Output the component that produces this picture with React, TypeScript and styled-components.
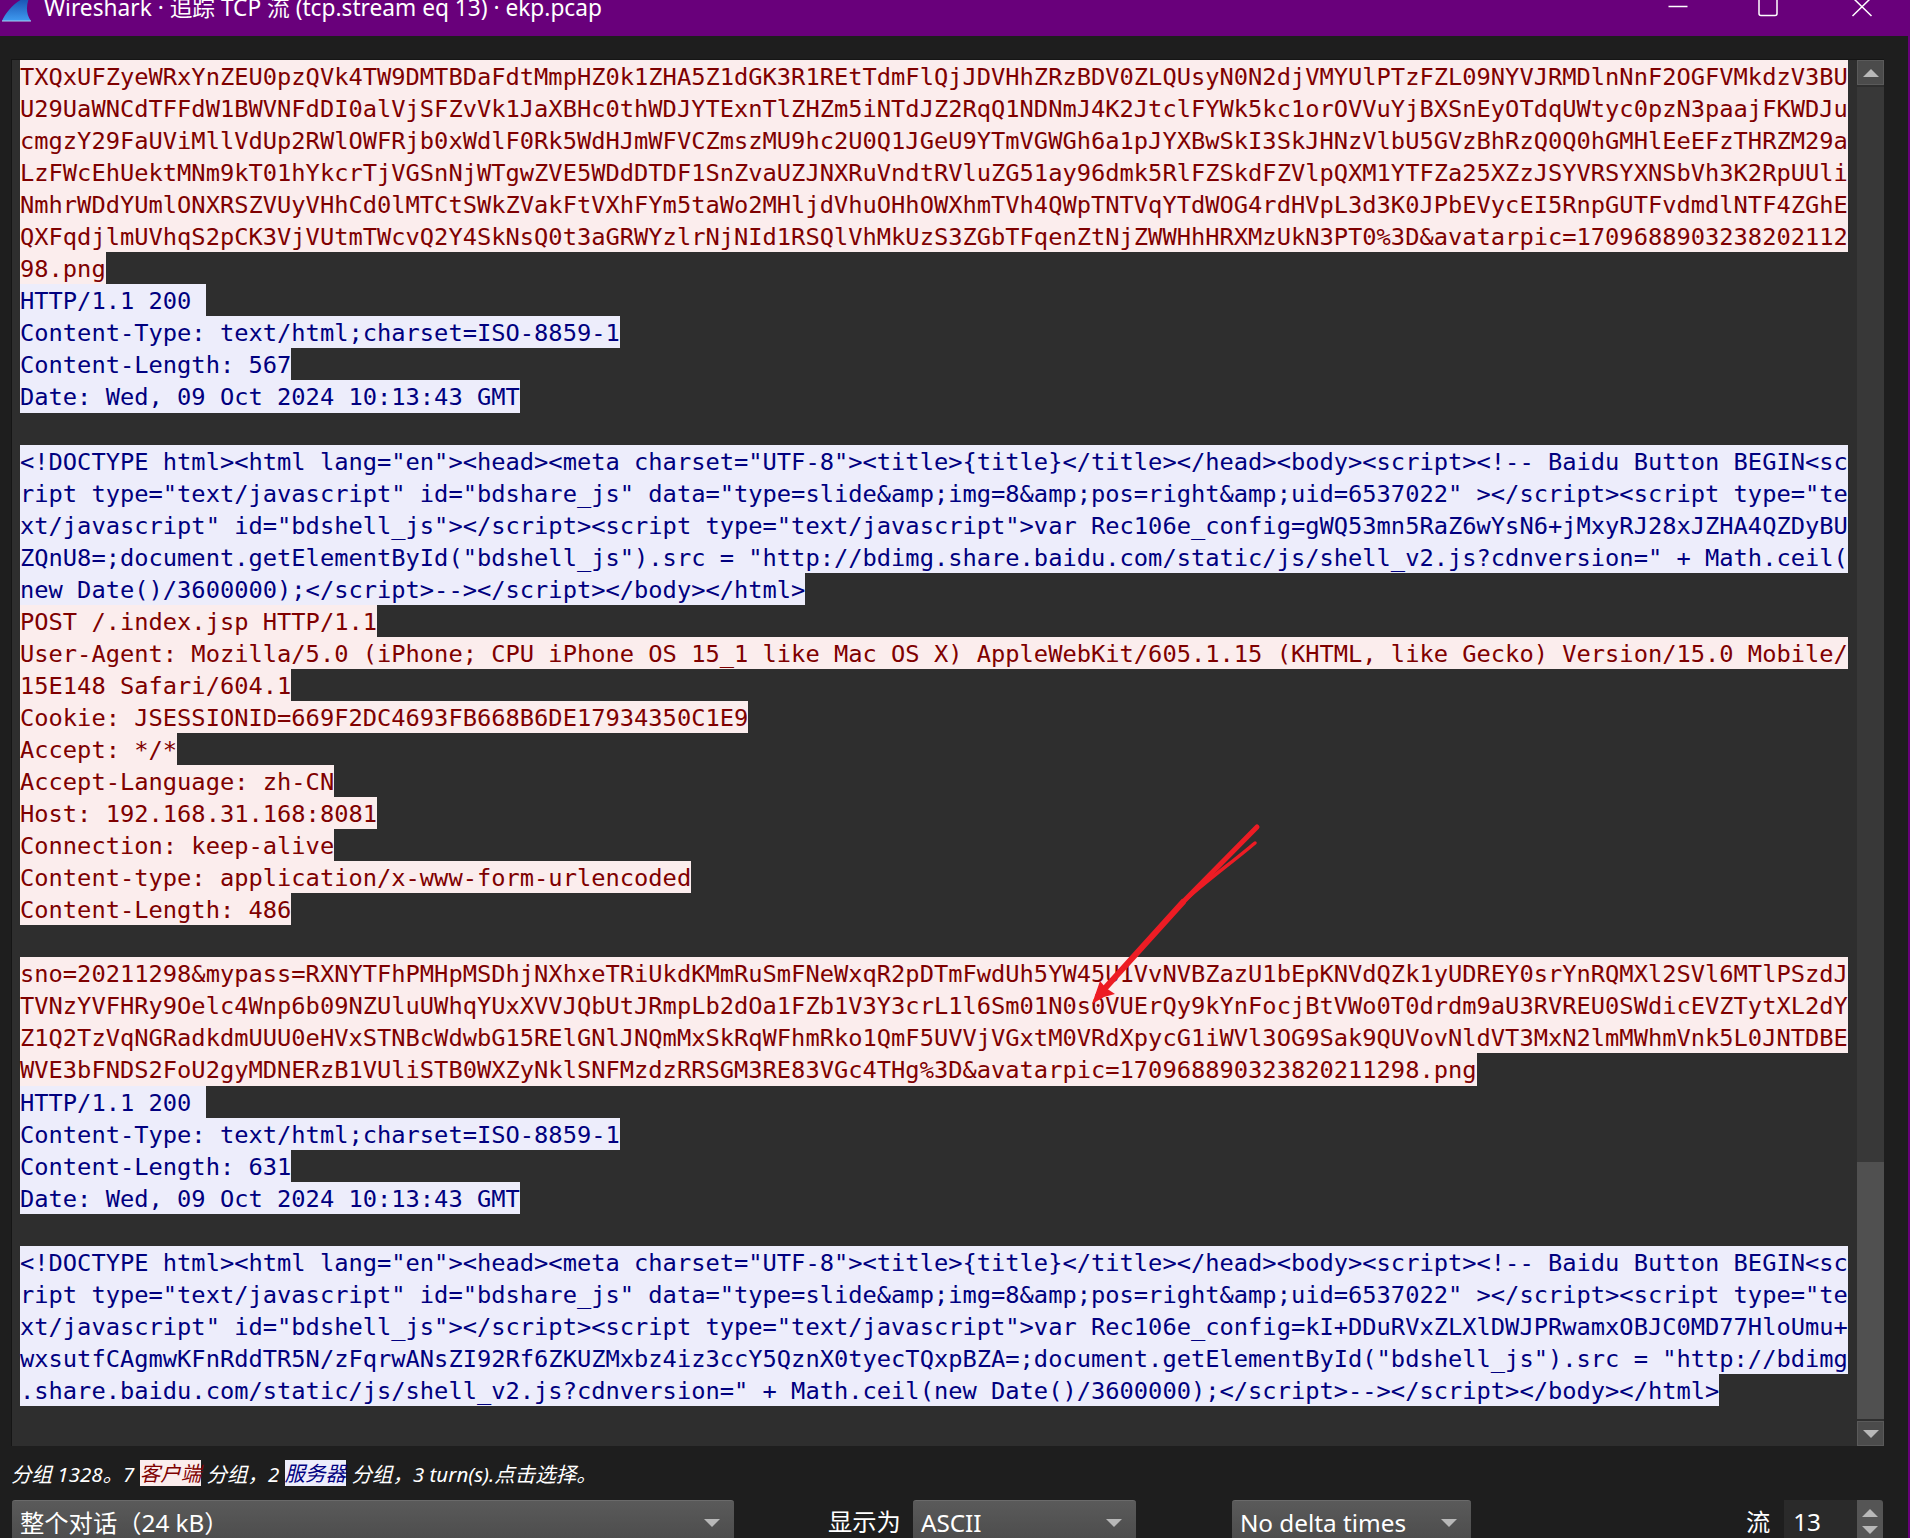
import styled, { createGlobalStyle } from 'styled-components';

type Side = 'client' | 'server' | 'gap';

const GlobalStyle = createGlobalStyle`
  html, body {
    margin: 0;
    padding: 0;
    background: #1e1e1e;
  }
`;

const uiFont = `'Noto Sans', 'Noto Sans CJK SC', sans-serif`;

const Window = styled.div`
  position: relative;
  width: 1910px;
  height: 1538px;
  overflow: hidden;
  display: flex;
  flex-direction: column;
  background: #1e1e1e;
  font-family: ${uiFont};
`;

const TitleBar = styled.div`
  flex: none;
  height: 36px;
  display: flex;
  align-items: flex-start;
  overflow: hidden;
  background: #69007b;
  color: #fff;
`;

const Logo = styled.svg`
  flex: none;
  width: 32px;
  height: 22px;
  margin-right: 12px;
`;

const TitleText = styled.div`
  margin-top: -8px;
  font-size: 22.7px;
  line-height: 32px;
  white-space: pre;
`;

const WindowButtons = styled.div`
  display: flex;
  margin-left: auto;
  padding-right: 2px;
`;

const WindowButton = styled.svg`
  display: block;
  width: 92px;
  height: 20px;
`;

const Body = styled.div`
  flex: 1;
  min-height: 0;
  display: flex;
  flex-direction: column;
  padding: 23px 24px 0 11px;
  border-right: 2px solid #69007b;
`;

const StreamPanel = styled.div`
  flex: none;
  height: 1387px;
  display: flex;
  box-sizing: border-box;
  background: #2e2e2e;
  border-top: 1px solid #151515;
  border-left: 1px solid #151515;
`;

const Stream = styled.div`
  flex: 1;
  min-width: 0;
  padding-left: 8px;
`;

const StreamLine = styled.div<{ $side: Side }>`
  width: fit-content;
  height: 32.05px;
  box-sizing: border-box;
  padding-top: 2px;
  font-family: 'DejaVu Sans Mono', monospace;
  font-size: 23.72px;
  line-height: 30.05px;
  white-space: pre;
  background: ${(p) => (p.$side === 'client' ? '#fbeded' : p.$side === 'server' ? '#ededfb' : 'transparent')};
  color: ${(p) => (p.$side === 'client' ? '#7f0000' : '#00007f')};
`;

const ScrollBar = styled.div`
  flex: none;
  width: 27px;
  display: flex;
  flex-direction: column;
  gap: 2px;
  background: #2e2e2e;
`;

const ScrollButton = styled.div`
  flex: none;
  height: 25px;
  display: flex;
  align-items: center;
  justify-content: center;
  background: #4b4b4b;
  border: 1px solid #5a5a5a;
  box-sizing: border-box;
`;

const ScrollTrack = styled.div`
  flex: 1;
  display: flex;
  flex-direction: column;
  justify-content: flex-end;
  background: #383838;
`;

const ScrollHandle = styled.div`
  height: 257px;
  background: #505050;
`;

const Triangle = styled.span<{ $up?: boolean }>`
  display: block;
  flex: none;
  width: 0;
  height: 0;
  border-left: 8px solid transparent;
  border-right: 8px solid transparent;
  ${(p) => (p.$up ? 'border-bottom' : 'border-top')}: 8px solid #b8b8b8;
`;

const StatusLine = styled.div`
  flex: none;
  height: 26px;
  margin: 14px 0;
  display: flex;
  align-items: center;
  color: #fff;
  font-size: 20.5px;
  font-style: italic;
  white-space: pre;
`;

const StatusTag = styled.span<{ $side: Side }>`
  height: 26px;
  line-height: 26px;
  background: ${(p) => (p.$side === 'client' ? '#fbeded' : '#ededfb')};
  color: ${(p) => (p.$side === 'client' ? '#7f0000' : '#00007f')};
`;

const Controls = styled.div`
  flex: none;
  height: 50px;
  display: flex;
  align-items: flex-start;
  padding-left: 1px;
  color: #fff;
  font-size: 24.3px;
`;

const Combo = styled.div<{ $width: number; $offset: number }>`
  flex: none;
  box-sizing: border-box;
  width: ${(p) => p.$width}px;
  height: 50px;
  margin-left: ${(p) => p.$offset}px;
  padding: 0 14px 6px 8px;
  display: flex;
  align-items: center;
  justify-content: space-between;
  background: linear-gradient(#5a5a5a, #494949);
  border-top: 1px solid #6a6a6a;
  border-radius: 3px;
  line-height: 43px;
  white-space: pre;
`;

const FieldLabel = styled.div<{ $offset: number }>`
  flex: none;
  margin-left: ${(p) => p.$offset}px;
  height: 44px;
  line-height: 44px;
`;

const SpinBox = styled.div`
  flex: none;
  display: flex;
  width: 99px;
  height: 50px;
  margin-left: 14px;
`;

const SpinValue = styled.div`
  flex: 1;
  padding-left: 9px;
  line-height: 44px;
  background: #2a2a2a;
`;

const SpinButtons = styled.div`
  flex: none;
  width: 26px;
  display: flex;
  flex-direction: column;
  align-items: center;
  gap: 9px;
  padding-top: 9px;
  box-sizing: border-box;
  background: #555;
  border-radius: 0 3px 0 0;
`;

const Annotation = styled.svg`
  position: absolute;
  left: 0;
  top: 0;
  width: 1910px;
  height: 1538px;
  pointer-events: none;
`;

const htmlHead = [
  '<!DOCTYPE html><html lang="en"><head><meta charset="UTF-8"><title>{title}</title></head><body><script><!-- Baidu Button BEGIN<sc',
  'ript type="text/javascript" id="bdshare_js" data="type=slide&amp;img=8&amp;pos=right&amp;uid=6537022" ></script><script type="te',
];

const conversation: [Side, string[]][] = [
  ['client', [
    'TXQxUFZyeWRxYnZEU0pzQVk4TW9DMTBDaFdtMmpHZ0k1ZHA5Z1dGK3R1REtTdmFlQjJDVHhZRzBDV0ZLQUsyN0N2djVMYUlPTzFZL09NYVJRMDlnNnF2OGFVMkdzV3BU',
    'U29UaWNCdTFFdW1BWVNFdDI0alVjSFZvVk1JaXBHc0thWDJYTExnTlZHZm5iNTdJZ2RqQ1NDNmJ4K2JtclFYWk5kc1orOVVuYjBXSnEyOTdqUWtyc0pzN3paajFKWDJu',
    'cmgzY29FaUViMllVdUp2RWlOWFRjb0xWdlF0Rk5WdHJmWFVCZmszMU9hc2U0Q1JGeU9YTmVGWGh6a1pJYXBwSkI3SkJHNzVlbU5GVzBhRzQ0Q0hGMHlEeEFzTHRZM29a',
    'LzFWcEhUektMNm9kT01hYkcrTjVGSnNjWTgwZVE5WDdDTDF1SnZvaUZJNXRuVndtRVluZG51ay96dmk5RlFZSkdFZVlpQXM1YTFZa25XZzJSYVRSYXNSbVh3K2RpUUli',
    'NmhrWDdYUmlONXRSZVUyVHhCd0lMTCtSWkZVakFtVXhFYm5taWo2MHljdVhuOHhOWXhmTVh4QWpTNTVqYTdWOG4rdHVpL3d3K0JPbEVycEI5RnpGUTFvdmdlNTF4ZGhE',
    'QXFqdjlmUVhqS2pCK3VjVUtmTWcvQ2Y4SkNsQ0t3aGRWYzlrNjNId1RSQlVhMkUzS3ZGbTFqenZtNjZWWHhHRXMzUkN3PT0%3D&avatarpic=1709688903238202112',
    '98.png',
  ]],
  ['server', [
    'HTTP/1.1 200 ',
    'Content-Type: text/html;charset=ISO-8859-1',
    'Content-Length: 567',
    'Date: Wed, 09 Oct 2024 10:13:43 GMT',
  ]],
  ['gap', ['']],
  ['server', [
    ...htmlHead,
    'xt/javascript" id="bdshell_js"></script><script type="text/javascript">var Rec106e_config=gWQ53mn5RaZ6wYsN6+jMxyRJ28xJZHA4QZDyBU',
    'ZQnU8=;document.getElementById("bdshell_js").src = "http://bdimg.share.baidu.com/static/js/shell_v2.js?cdnversion=" + Math.ceil(',
    'new Date()/3600000);</script>--></script></body></html>',
  ]],
  ['client', [
    'POST /.index.jsp HTTP/1.1',
    'User-Agent: Mozilla/5.0 (iPhone; CPU iPhone OS 15_1 like Mac OS X) AppleWebKit/605.1.15 (KHTML, like Gecko) Version/15.0 Mobile/',
    '15E148 Safari/604.1',
    'Cookie: JSESSIONID=669F2DC4693FB668B6DE17934350C1E9',
    'Accept: */*',
    'Accept-Language: zh-CN',
    'Host: 192.168.31.168:8081',
    'Connection: keep-alive',
    'Content-type: application/x-www-form-urlencoded',
    'Content-Length: 486',
  ]],
  ['gap', ['']],
  ['client', [
    'sno=20211298&mypass=RXNYTFhPMHpMSDhjNXhxeTRiUkdKMmRuSmFNeWxqR2pDTmFwdUh5YW45U1VvNVBZazU1bEpKNVdQZk1yUDREY0srYnRQMXl2SVl6MTlPSzdJ',
    'TVNzYVFHRy9Oelc4Wnp6b09NZUluUWhqYUxXVVJQbUtJRmpLb2dOa1FZb1V3Y3crL1l6Sm01N0s0VUErQy9kYnFocjBtVWo0T0drdm9aU3RVREU0SWdicEVZTytXL2dY',
    'Z1Q2TzVqNGRadkdmUUU0eHVxSTNBcWdwbG15RElGNlJNQmMxSkRqWFhmRko1QmF5UVVjVGxtM0VRdXpycG1iWVl3OG9Sak9QUVovNldVT3MxN2lmMWhmVnk5L0JNTDBE',
    'WVE3bFNDS2FoU2gyMDNERzB1VUliSTB0WXZyNklSNFMzdzRRSGM3RE83VGc4THg%3D&avatarpic=170968890323820211298.png',
  ]],
  ['server', [
    'HTTP/1.1 200 ',
    'Content-Type: text/html;charset=ISO-8859-1',
    'Content-Length: 631',
    'Date: Wed, 09 Oct 2024 10:13:43 GMT',
  ]],
  ['gap', ['']],
  ['server', [
    ...htmlHead,
    'xt/javascript" id="bdshell_js"></script><script type="text/javascript">var Rec106e_config=kI+DDuRVxZLXlDWJPRwamxOBJC0MD77HloUmu+',
    'wxsutfCAgmwKFnRddTR5N/zFqrwANsZI92Rf6ZKUZMxbz4iz3ccY5QznX0tyecTQxpBZA=;document.getElementById("bdshell_js").src = "http://bdimg',
    '.share.baidu.com/static/js/shell_v2.js?cdnversion=" + Math.ceil(new Date()/3600000);</script>--></script></body></html>',
  ]],
];

const App = () => {
  return (
    <Window>
      <GlobalStyle />
      <TitleBar>
        <Logo viewBox="0 0 32 22">
          <defs>
            <linearGradient id="fin" x1="0" y1="0" x2="0" y2="1">
              <stop offset="0" stopColor="#174fb0" />
              <stop offset="1" stopColor="#3f9bf0" />
            </linearGradient>
          </defs>
          <path d="M2 21C6 12 14 3 24 -2L29 -2C26 6 26 14 31 21Z" fill="url(#fin)" />
          <path d="M2 21H31" stroke="#a9cff0" strokeWidth="1" />
        </Logo>
        <TitleText>Wireshark · 追踪 TCP 流 (tcp.stream eq 13) · ekp.pcap</TitleText>
        <WindowButtons>
          <WindowButton viewBox="0 0 92 20">
            <path d="M36.5 6.5H55.5" stroke="#fff" strokeWidth="1.5" fill="none" />
          </WindowButton>
          <WindowButton viewBox="0 0 92 20">
            <path d="M35 -4V13.5Q35 15.5 37 15.5H51Q53 15.5 53 13.5V-4" stroke="#fff" strokeWidth="1.5" fill="none" />
          </WindowButton>
          <WindowButton viewBox="0 0 92 20">
            <path d="M36.5 -2.5L55.5 16M55.5 -2.5L36.5 16" stroke="#fff" strokeWidth="1.5" fill="none" />
          </WindowButton>
        </WindowButtons>
      </TitleBar>

      <Body>
        <StreamPanel>
          <Stream>
            {conversation.map(([side, lines], block) =>
              lines.map((line, i) => (
                <StreamLine key={`${block}-${i}`} $side={side}>
                  {line}
                </StreamLine>
              )),
            )}
          </Stream>
          <ScrollBar>
            <ScrollButton>
              <Triangle $up />
            </ScrollButton>
            <ScrollTrack>
              <ScrollHandle />
            </ScrollTrack>
            <ScrollButton>
              <Triangle />
            </ScrollButton>
          </ScrollBar>
        </StreamPanel>

        <StatusLine>
          分组 1328。7 <StatusTag $side="client">客户端</StatusTag> 分组，2 <StatusTag $side="server">服务器</StatusTag> 分组，3 turn(s).点击选择。
        </StatusLine>

        <Controls>
          <Combo $width={722} $offset={0}>
            整个对话（24 kB）
            <Triangle />
          </Combo>
          <FieldLabel $offset={94}>显示为</FieldLabel>
          <Combo $width={223} $offset={12}>
            ASCII
            <Triangle />
          </Combo>
          <Combo $width={239} $offset={96}>
            No delta times
            <Triangle />
          </Combo>
          <FieldLabel $offset={275}>流</FieldLabel>
          <SpinBox>
            <SpinValue>13</SpinValue>
            <SpinButtons>
              <Triangle $up />
              <Triangle />
            </SpinButtons>
          </SpinBox>
        </Controls>
      </Body>

      <Annotation viewBox="0 0 1910 1538">
        <g fill="none" stroke="#ed1c24" strokeLinecap="round">
          <path d="M1257 827L1183 902" strokeWidth="5" />
          <path d="M1183 902L1098 996" strokeWidth="6" />
          <path d="M1255 843C1235 860 1205 882 1183 902" strokeWidth="3.5" />
        </g>
        <path d="M1092 1004L1100 981L1106 988L1115 994L1104 997Z" fill="#ed1c24" />
      </Annotation>
    </Window>
  );
};

export default App;
